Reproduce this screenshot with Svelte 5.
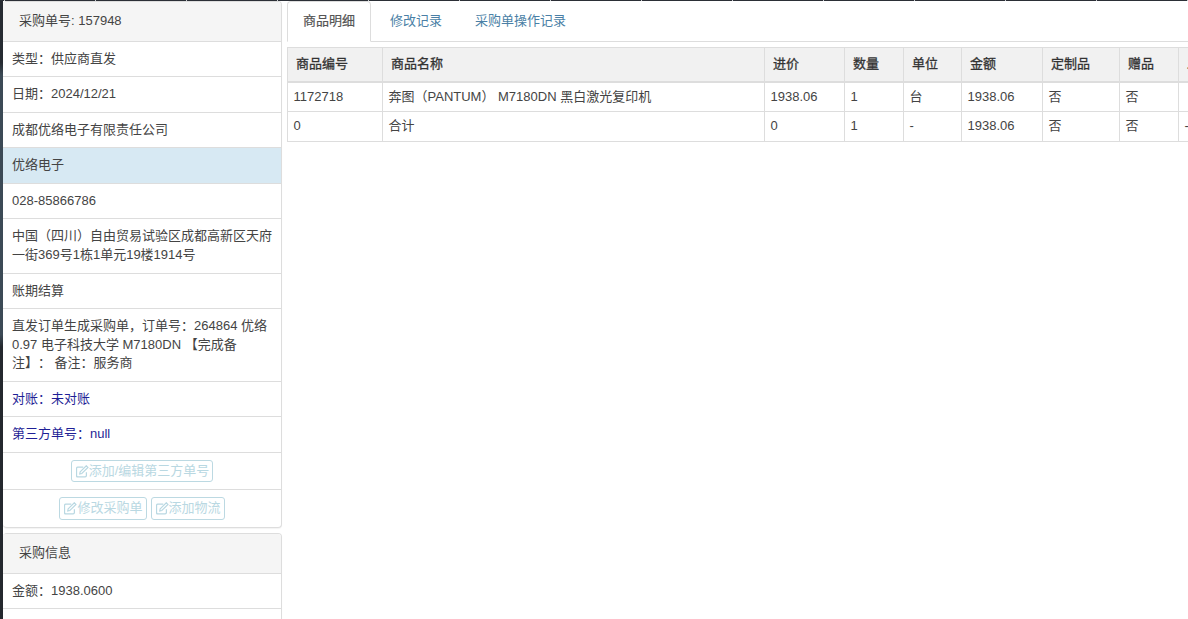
<script lang="ts">
  const infoRows = [
    { text: '类型：供应商直发' },
    { text: '日期：2024/12/21' },
    { text: '成都优络电子有限责任公司' },
    { text: '优络电子', cls: 'info' },
    { text: '028-85866786' },
    { text: '中国（四川）自由贸易试验区成都高新区天府一街369号1栋1单元19楼1914号' },
    { text: '账期结算' },
    { text: '直发订单生成采购单，订单号：264864 优络 0.97 电子科技大学 M7180DN 【完成备注】： 备注：服务商' },
    { text: '对账：未对账', cls: 'navy' },
    { text: '第三方单号：null', cls: 'navy' }
  ];

  const columns = [
    { title: '商品编号', width: 95 },
    { title: '商品名称', width: 382 },
    { title: '进价', width: 80 },
    { title: '数量', width: 59 },
    { title: '单位', width: 58 },
    { title: '金额', width: 81 },
    { title: '定制品', width: 77 },
    { title: '赠品', width: 59 },
    { title: '发票', width: 80 }
  ];

  const rows = [
    ['1172718', '奔图（PANTUM） M7180DN 黑白激光复印机', '1938.06', '1', '台', '1938.06', '否', '否', ''],
    ['0', '合计', '0', '1', '-', '1938.06', '否', '否', '-']
  ];
</script>

{#snippet editIcon()}
  <svg class="edit" viewBox="1 1 12.5 12.5" width="13" height="13" aria-hidden="true">
    <path d="M11 8v3.2a1.3 1.3 0 0 1-1.3 1.3H2.8a1.3 1.3 0 0 1-1.3-1.3V4.3A1.3 1.3 0 0 1 2.8 3H8" fill="none" stroke="currentColor" stroke-width="1.2" />
    <path d="M5 7.6 10.9 1.7l1.6 1.6L6.6 9.2 4.6 9.6Z" fill="none" stroke="currentColor" stroke-width="1.1" />
  </svg>
{/snippet}

<div class="topline"></div>
<div class="page">
  <div class="rail"></div>

  <aside class="side">
    <section class="panel">
      <div class="panel-head">采购单号: 157948</div>
      {#each infoRows as row}
        <div class="item {row.cls ?? ''}">{row.text}</div>
      {/each}
      <div class="item actions">
        <button disabled>{@render editIcon()}添加/编辑第三方单号</button>
      </div>
      <div class="item actions last">
        <button disabled>{@render editIcon()}修改采购单</button>
        <button disabled>{@render editIcon()}添加物流</button>
      </div>
    </section>

    <section class="panel">
      <div class="panel-head">采购信息</div>
      <div class="item">金额：1938.0600</div>
      <div class="item">&nbsp;</div>
    </section>
  </aside>

  <main class="content">
    <ul class="tabs">
      <li class="active">商品明细</li>
      <li>修改记录</li>
      <li>采购单操作记录</li>
    </ul>

    <table>
      <colgroup>
        {#each columns as col}
          <col style="width: {col.width}px" />
        {/each}
      </colgroup>
      <thead>
        <tr>
          {#each columns as col}
            <th>{col.title}</th>
          {/each}
        </tr>
      </thead>
      <tbody>
        {#each rows as row}
          <tr>
            {#each row as cell}
              <td>{cell}</td>
            {/each}
          </tr>
        {/each}
      </tbody>
    </table>
  </main>
</div>

<style>
  :global(html), :global(body) {
    margin: 0;
    height: 100%;
    overflow: hidden;
    background: #fff;
  }

  :global(*) {
    box-sizing: border-box;
  }

  .topline {
    height: 1px;
    background: linear-gradient(90deg, #c9ccd0 0, #c9ccd0 1px, #2b2f36 1px, #2b2f36 100%) 4px 0 / 91px 1px repeat-x;
  }

  .page {
    display: flex;
    height: 618px;
    overflow: hidden;
    font-family: "Liberation Sans", "Noto Sans CJK SC", sans-serif;
    font-size: 13px;
    line-height: 18.57px;
    color: #444;
    text-spacing-trim: space-all;
  }

  .rail {
    flex: 0 0 3px;
    background: linear-gradient(180deg, #262b32 0, #262b32 10%, #3c4a56 12%, #3c4a56 54%, #24282e 56%, #24282e 100%);
  }

  .side {
    flex: 0 0 279px;
  }

  .panel {
    border: 1px solid #ddd;
    border-left: 0;
    border-radius: 4px;
    margin-bottom: 5px;
    background: #fff;
    box-shadow: 0 1px 1px rgba(0, 0, 0, 0.05);
  }

  .panel-head {
    padding: 10px 15px 10px 16px;
    background: #f5f5f5;
    border-bottom: 1px solid #ddd;
    border-radius: 3px 3px 0 0;
  }

  .item {
    padding: 8px 9px;
    border-bottom: 1px solid #ddd;
  }

  .item.info {
    background: #d7e9f3;
  }

  .item.navy {
    color: #1f1f96;
  }

  .item.actions {
    display: flex;
    justify-content: center;
    gap: 4px;
    padding: 7px 0;
  }

  .item.last {
    border-bottom: 0;
  }

  button {
    display: inline-flex;
    align-items: center;
    height: 22.57px;
    padding: 0 3px 0 4px;
    font: inherit;
    color: #b9d8e2;
    background: #fff;
    border: 1px solid #bcd9e2;
    border-radius: 3px;
  }

  .content {
    flex: 0 0 906px;
    margin-left: 5px;
    min-width: 0;
  }

  .tabs {
    display: flex;
    gap: 1px;
    list-style: none;
    margin: 0 0 5px;
    padding: 0;
    height: 41px;
    border-bottom: 1px solid #ddd;
    color: #4a7fa6;
  }

  .tabs li {
    padding: 10px 15px;
    height: 41px;
    border: 1px solid transparent;
  }

  .tabs li:nth-child(2) {
    margin-left: 2px;
  }

  .tabs li.active {
    color: #555;
    background: #fff;
    border-color: #ddd #ddd #fff;
    border-radius: 4px 4px 0 0;
    -webkit-text-stroke: 0.2px #555;
  }

  table {
    table-layout: fixed;
    border-collapse: collapse;
    width: 971px;
  }

  th, td {
    border: 1px solid #ddd;
    text-align: left;
    white-space: nowrap;
    overflow: hidden;
  }

  th {
    padding: 7px 8px;
    background: #f1f1f1;
    border-bottom-width: 2px;
    color: #333;
    font-weight: 400;
    -webkit-text-stroke: 0.3px #333;
  }

  td {
    padding: 5px 5.5px;
  }
</style>
